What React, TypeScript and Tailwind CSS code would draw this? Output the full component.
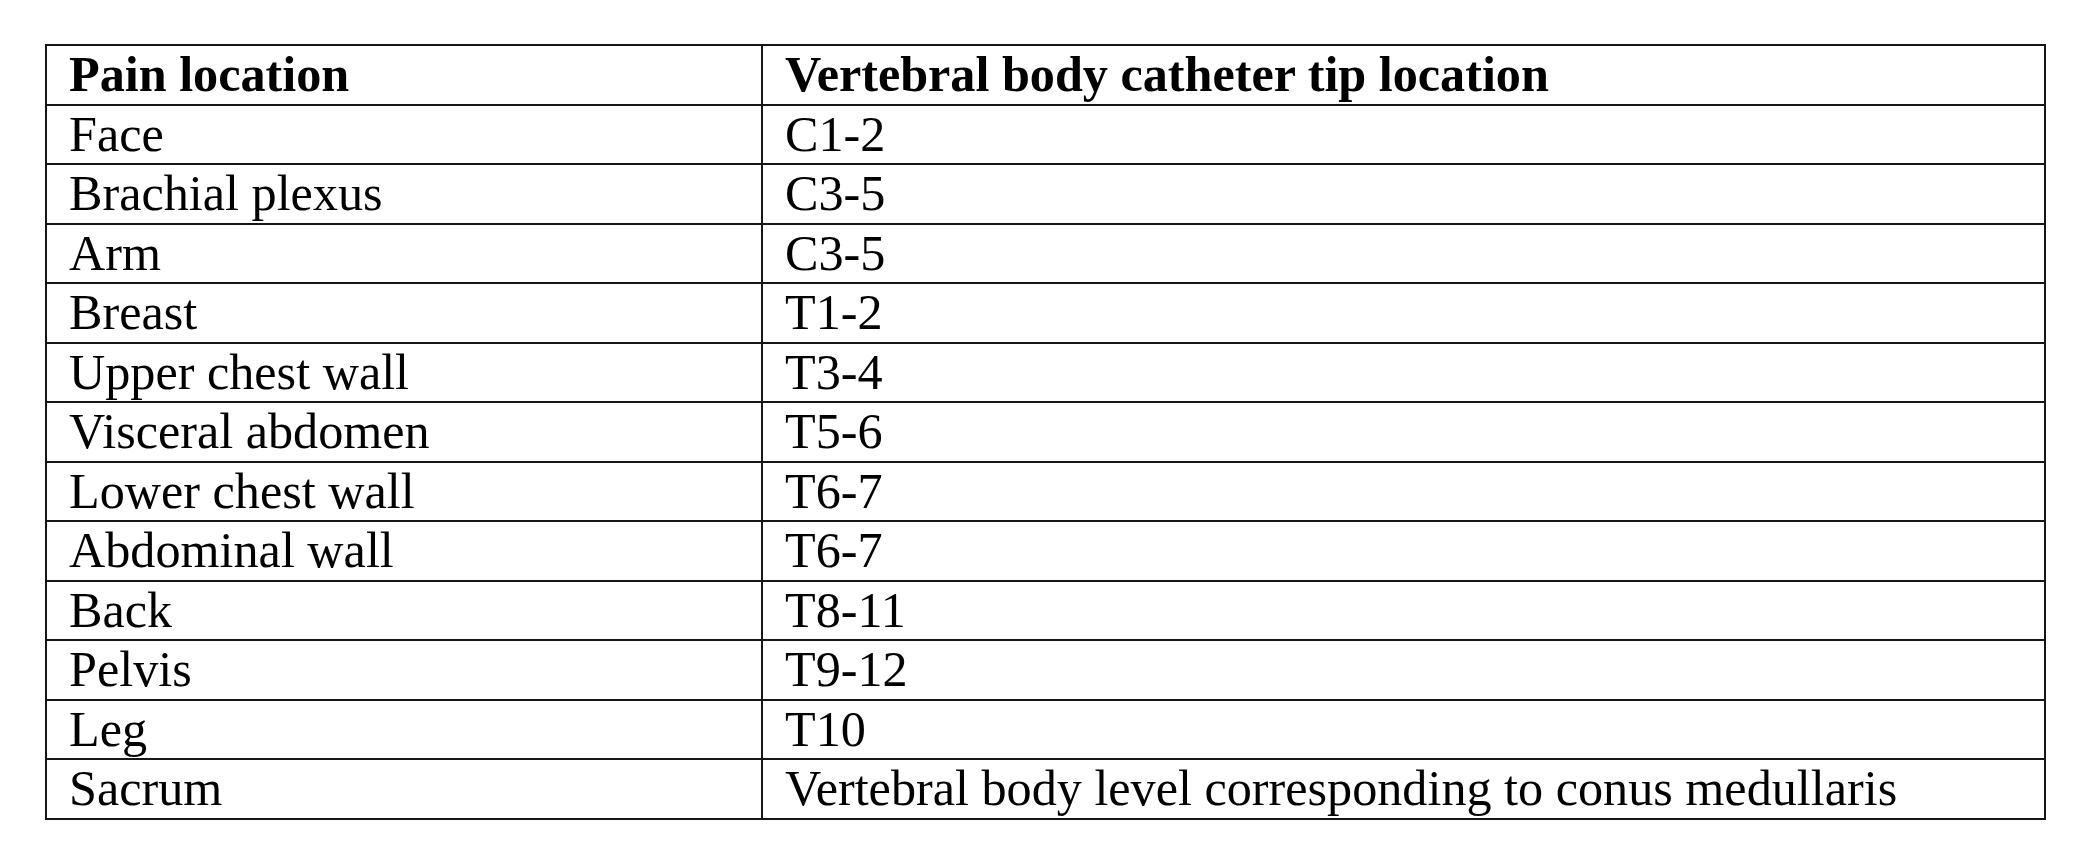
import React from "react";

const rows: [string, string][] = [
  ["Face", "C1-2"],
  ["Brachial plexus", "C3-5"],
  ["Arm", "C3-5"],
  ["Breast", "T1-2"],
  ["Upper chest wall", "T3-4"],
  ["Visceral abdomen", "T5-6"],
  ["Lower chest wall", "T6-7"],
  ["Abdominal wall", "T6-7"],
  ["Back", "T8-11"],
  ["Pelvis", "T9-12"],
  ["Leg", "T10"],
  ["Sacrum", "Vertebral body level corresponding to conus medullaris"],
];

function Row({ a, b, bold }: { a: string; b: string; bold?: boolean }) {
  return (
    <div className={`flex h-[59.5px] border-b-2 border-[#161616] ${bold ? "font-bold" : ""}`}>
      <div className="w-[716px] shrink-0 border-r-2 border-[#161616] pl-[22px] text-[50.2px] leading-[57.5px] whitespace-nowrap">
        {a}
      </div>
      <div className="w-[1283px] shrink-0 border-r-2 border-[#161616] pl-[22px] text-[50.2px] leading-[57.5px] whitespace-nowrap">
        {b}
      </div>
    </div>
  );
}

export default function App() {
  return (
    <div
      className="w-[2090px] h-[864px] bg-white text-black pt-[44px] pl-[45px]"
      style={{ fontFamily: '"Liberation Serif", "Times New Roman", serif' }}
    >
      <div className="w-[2001px] border-t-2 border-l-2 border-[#161616]">
        <Row a="Pain location" b="Vertebral body catheter tip location" bold />
        {rows.map(([a, b], i) => (
          <Row key={i} a={a} b={b} />
        ))}
      </div>
    </div>
  );
}
